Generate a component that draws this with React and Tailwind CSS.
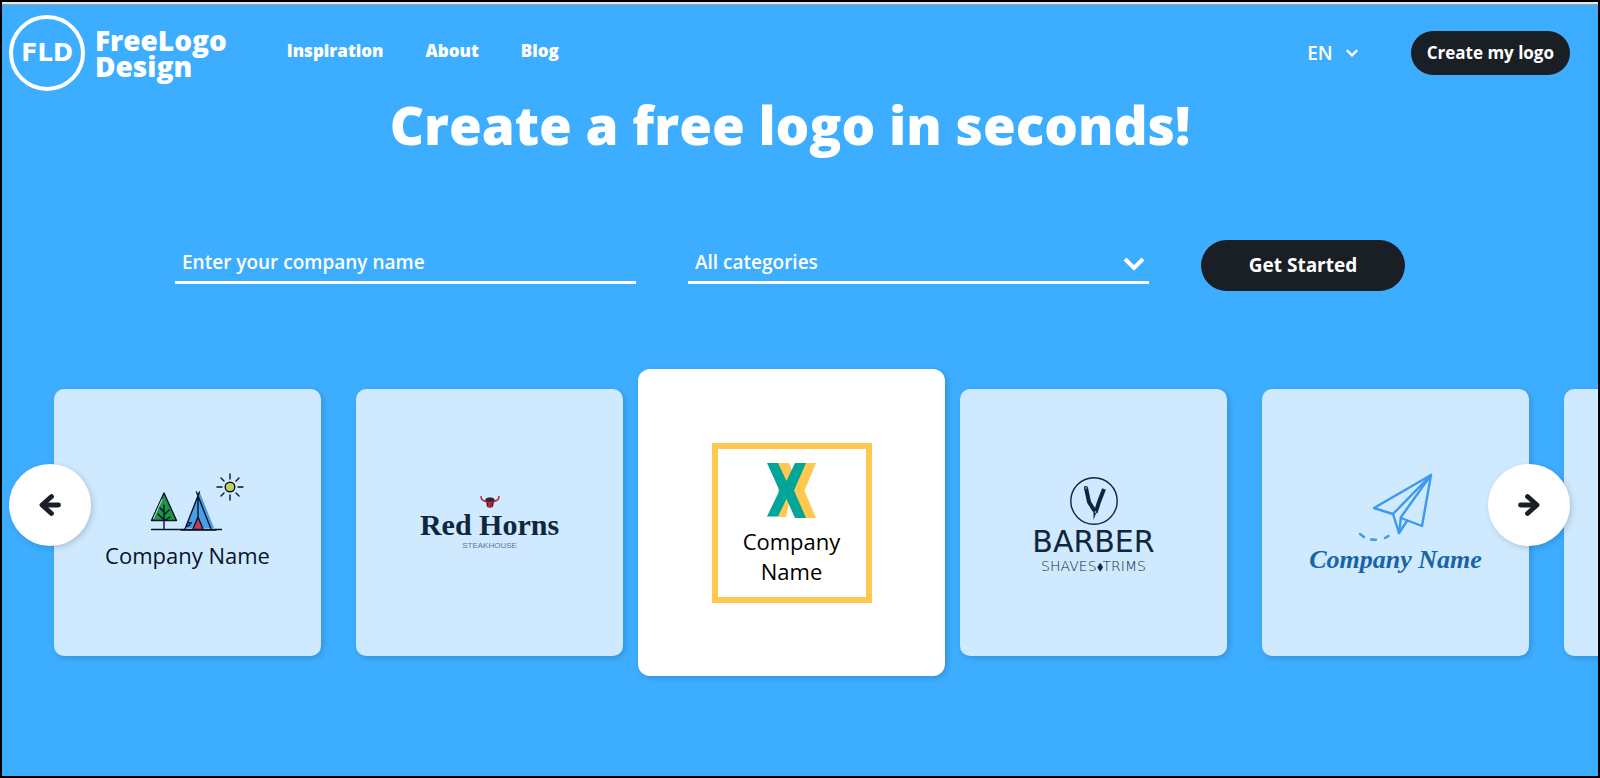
import React, { useState } from 'react'

const NAV_LINKS = ['Inspiration', 'About', 'Blog']

function BrandLogo() {
  return (
    <a href="#" className="flex items-center gap-[10px]">
      <span className="flex h-[76px] w-[76px] items-center justify-center rounded-full border-4 border-white font-['DejaVu_Sans',sans-serif] text-2xl font-bold">
        FLD
      </span>
      <span className="text-[28px] font-extrabold leading-[26px]">
        FreeLogo
        <br />
        Design
      </span>
    </a>
  )
}

function Chevron({ className, width }) {
  return (
    <svg viewBox="0 0 24 16" className={className} fill="none" stroke="currentColor" strokeWidth={width} aria-hidden="true">
      <path d="M3 3l9 9 9-9" />
    </svg>
  )
}

function Arrow({ flip }) {
  return (
    <svg
      viewBox="0 0 24 24"
      className={flip ? 'h-6 w-6 rotate-180' : 'h-6 w-6'}
      fill="none"
      stroke="#1a1e25"
      strokeWidth="4.800"
      strokeLinecap="round"
      strokeLinejoin="round"
      aria-hidden="true"
    >
      <path d="M13.500 3.500L4 12l9.500 8.500" />
      <path d="M5 12h15.500" />
    </svg>
  )
}

function CampLogo() {
  return (
    <div className="flex flex-col items-center gap-2 pb-1 text-[#08142c]">
      <svg viewBox="0 0 118 60" className="h-[60px] w-[118px]" fill="none" stroke="#08142c" strokeWidth="1.4" strokeLinecap="round">
        {/* tree */}
        <path d="M36 21L23.500 48.500h25z" fill="#1f9444" strokeLinejoin="round" />
        <path d="M34 27.500L25.500 46.500" stroke="#bfe6d8" strokeWidth="1" />
        <path d="M36 57V33M36 40l-4-4M36 43l5-5M36 48l-6-6M36 49l6-4" />
        {/* tent */}
        <path d="M70 22l2-1 14 35H58z" fill="#4a9fe4" stroke="none" />
        <path d="M70 45l-5 12h10z" fill="#c73b50" stroke="none" />
        <path d="M71.500 20L57 57M68.500 20L83 57M70 23v22M70 45l-5 12M70 45l5 12M59 54l3-1M60.500 51l3 0" />
        <path d="M23.500 57.500h70" />
        <path d="M53 58h35" />
        {/* sun */}
        <circle cx="102" cy="15" r="4.800" fill="#c9d15a" />
        <path d="M102 2v5M102 23v5M89 15h5M110 15h5M93 6l3 3M108 21l3 3M111 6l-3 3M96 21l-3 3" />
      </svg>
      <span className="text-[22px] leading-[30px]">Company Name</span>
    </div>
  )
}

function SteakhouseLogo() {
  return (
    <div className="flex flex-col items-center text-[#10263c]">
      <svg viewBox="0 0 20 13" className="h-[13px] w-5" aria-hidden="true">
        <path d="M1 1c0 4 2 5 5 5M19 1c0 4-2 5-5 5" fill="none" stroke="#b8293d" strokeWidth="1.500" />
        <path d="M6 4c2-1.500 6-1.500 8 0l2 2-2 1.500-1 4.500-3 1-3-1-1-4.500L4 6z" fill="#a32b3e" />
        <path d="M6 4c2-1.500 6-1.500 8 0l-1 2H7zM7.500 8v3M12.500 8v3" fill="#2c2334" stroke="#2c2334" />
      </svg>
      <span className="font-['Liberation_Serif',serif] text-[30px] font-bold leading-[34px]">Red Horns</span>
      <span className="font-['Liberation_Sans',sans-serif] text-[8px] leading-2 text-[#6d7391]">STEAKHOUSE</span>
    </div>
  )
}

function LetterLogo() {
  return (
    <div className="flex h-40 w-40 flex-col items-center border-[6px] border-[#ffc84f] pt-[14px] text-black">
      <svg viewBox="0 0 50 55" className="mb-2 h-[55px] w-[50px]" aria-hidden="true">
        <path d="M11 0h11l6 12 6-12h15L37.500 27.500 49 55H38L22 40 19 54H11z" fill="#ffc84f" />
        <path d="M22 0h6l-3 7zM22 54l3-9 3 10z" fill="#fff" />
        <path d="M0 0h11l8.500 18L28 0h11L27 27.500 39 55H28l-8.500-19L11 53.500H0l12.500-26z" fill="#02a698" />
      </svg>
      <span className="text-center text-[22px] leading-[30px]">
        Company
        <br />
        Name
      </span>
    </div>
  )
}

function BarberLogo() {
  return (
    <div className="flex flex-col items-center pt-1 font-['DejaVu_Sans',sans-serif] text-[#10263c]">
      <svg viewBox="0 0 50 50" className="h-[50px] w-[50px]" aria-hidden="true">
        <circle cx="25" cy="25" r="23.200" fill="none" stroke="#10263c" strokeWidth="1.400" />
        <path d="M17 12l3 14 5 8" fill="none" stroke="#10263c" strokeWidth="4" strokeLinecap="round" />
        <path d="M35 13l-5 13-3.500 11" fill="none" stroke="#10263c" strokeWidth="4" />
        <path d="M24.500 36h3l-3 8z" fill="#10263c" />
        <circle cx="17" cy="12" r="0.800" fill="#cfeaff" />
        <circle cx="26.500" cy="36" r="0.800" fill="#cfeaff" />
      </svg>
      <span className="text-[30px] leading-8">BARBER</span>
      <span className="text-sm font-extralight leading-4">SHAVES⬧TRIMS</span>
    </div>
  )
}

function PlaneLogo() {
  return (
    <div className="flex flex-col items-center">
      <svg viewBox="0 0 88 74" className="h-[74px] w-[88px]" fill="none" stroke="#3d99ee" strokeWidth="2.400" strokeLinecap="round" strokeLinejoin="round">
        <path d="M80 5L23 38l19 6 6 19 8-12M80 5l-9 51-21-8" />
        <path d="M80 5L42 44M80 5L50 47l-2 16" />
        <path d="M9 64l4 3M20 69.500l5 .3M34 68l3.500-2" />
      </svg>
      <span className="font-['Liberation_Serif',serif] text-[26px] font-bold italic leading-8 text-[#1765a8]">Company Name</span>
    </div>
  )
}

const TEMPLATES = [
  { id: 'camp', Logo: CampLogo },
  { id: 'steakhouse', Logo: SteakhouseLogo },
  { id: 'letter', Logo: LetterLogo, active: true },
  { id: 'barber', Logo: BarberLogo },
  { id: 'plane', Logo: PlaneLogo },
  { id: 'empty' },
]

function TemplateCard({ Logo, active }) {
  return (
    <li
      className={
        active
          ? '-mx-5 flex h-[307px] w-[307px] shrink-0 items-center justify-center rounded-xl bg-white shadow-[2px_2px_6px_rgba(0,0,0,0.16)]'
          : 'flex h-[267px] w-[267px] shrink-0 items-center justify-center rounded-[10px] bg-[#cfeaff] shadow-[2px_2px_6px_rgba(0,0,0,0.16)]'
      }
    >
      {Logo && <Logo />}
    </li>
  )
}

function App() {
  const [company, setCompany] = useState('')

  return (
    <div className="min-h-screen overflow-hidden border-2 border-black bg-[#3daeff] font-['Open_Sans',sans-serif] text-white">
      <div className="h-[3px] border-b border-gray-400 bg-gray-200" />

      <header className="flex items-center pl-[7px] pr-7 pt-[10px]">
        <BrandLogo />
        <nav className="ml-[60px] flex gap-[42px] pb-1 text-[17px] font-extrabold">
          {NAV_LINKS.map((link) => (
            <a key={link} href="#">
              {link}
            </a>
          ))}
        </nav>
        <button className="ml-auto flex items-center gap-3 text-[19px] font-semibold">
          EN
          <Chevron className="h-[10px] w-[14px]" width={4} />
        </button>
        <button className="ml-[52px] h-11 rounded-full bg-[#1a1e25] px-4 text-[17px] font-bold">Create my logo</button>
      </header>

      <main>
        <h1 className="pr-5 text-center text-[53px] font-extrabold leading-[68px]">Create a free logo in seconds!</h1>

        <form className="mt-[81px] flex items-center justify-center gap-[52px] pr-5" onSubmit={(e) => e.preventDefault()}>
          <input
            aria-label="Enter your company name"
            placeholder="Enter your company name"
            value={company}
            onChange={(e) => setCompany(e.target.value)}
            className="h-9 w-[461px] border-b-[3px] border-white bg-transparent px-[7px] pb-1 text-[19px] font-semibold outline-none placeholder:text-white"
          />
          <div className="relative w-[461px]">
            <select
              aria-label="All categories"
              className="block h-9 w-full appearance-none border-b-[3px] border-white bg-transparent px-[7px] pb-1 text-[19px] font-semibold outline-none"
            >
              <option>All categories</option>
            </select>
            <Chevron className="pointer-events-none absolute right-[3px] top-2 h-4 w-6" width={4} />
          </div>
          <button className="h-[51px] w-[204px] rounded-full bg-[#1a1e25] text-[19px] font-bold">Get Started</button>
        </form>

        <section className="relative mt-[78px]">
          <ul className="flex items-center gap-[35px] pl-[52px]">
            {TEMPLATES.map((item) => (
              <TemplateCard key={item.id} Logo={item.Logo} active={item.active} />
            ))}
          </ul>
          <button
            aria-label="Previous"
            className="absolute left-[7px] top-[95px] flex h-[82px] w-[82px] items-center justify-center rounded-full bg-white shadow-[2px_2px_6px_rgba(0,0,0,0.16)]"
          >
            <Arrow />
          </button>
          <button
            aria-label="Next"
            className="absolute right-7 top-[95px] flex h-[82px] w-[82px] items-center justify-center rounded-full bg-white shadow-[2px_2px_6px_rgba(0,0,0,0.16)]"
          >
            <Arrow flip />
          </button>
        </section>
      </main>
    </div>
  )
}

export default App
